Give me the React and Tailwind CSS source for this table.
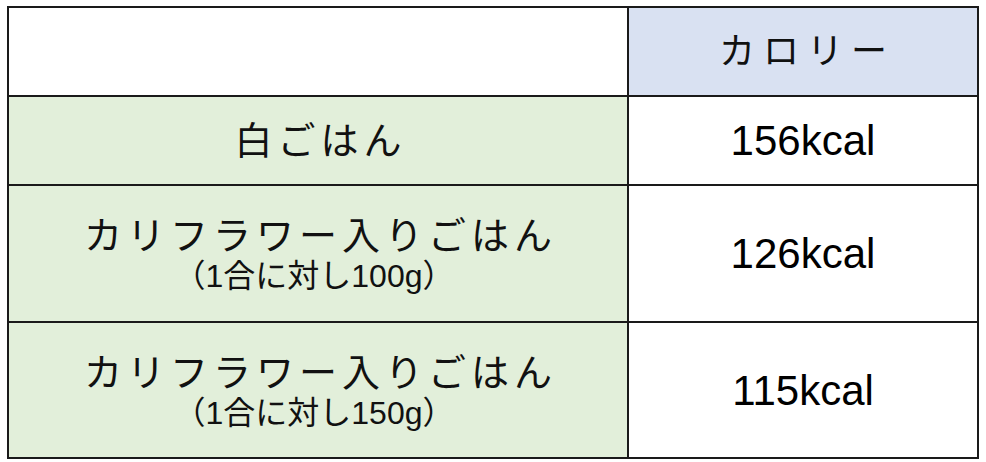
const jp = "font-['Liberation_Sans','Noto_Sans_CJK_JP',sans-serif]";

const FoodCell = ({ name, note }) => {
  return (
    <div className="bg-[#e2efda] flex flex-col justify-center items-center text-[#111]">
      <p className="text-[38px] leading-[44px] tracking-[5px] font-normal pl-[5px]">{name}</p>
      {note && (
        <p className="text-[32px] leading-[34px] mt-[1px] pr-[8px]">{note}</p>
      )}
    </div>
  );
};

const KcalCell = ({ value }) => {
  return (
    <div className="bg-white flex justify-center items-center">
      <p className="text-[42px] text-black font-['Liberation_Sans',Arial,sans-serif]">
        {value}
      </p>
    </div>
  );
};

const App = () => {
  return (
    <section className={"w-[986px] h-[462px] bg-white pt-[6px] pl-[7px] " + jp}>
      <div className="w-fit grid grid-cols-[618px_348px] grid-rows-[87px_87px_135px_134px] gap-[2px] p-[2px] bg-[#1a1a1a]">
        <div className="bg-white"></div>
        <div className="bg-[#d9e1f2] flex justify-center items-center">
          <p className="text-[36px] tracking-[8px] font-normal text-[#111] pl-[8px]">
            カロリー
          </p>
        </div>
        <FoodCell name="白ごはん" />
        <KcalCell value="156kcal" />
        <FoodCell name="カリフラワー入りごはん" note="（1合に対し100g）" />
        <KcalCell value="126kcal" />
        <FoodCell name="カリフラワー入りごはん" note="（1合に対し150g）" />
        <KcalCell value="115kcal" />
      </div>
    </section>
  );
};

export default App;
